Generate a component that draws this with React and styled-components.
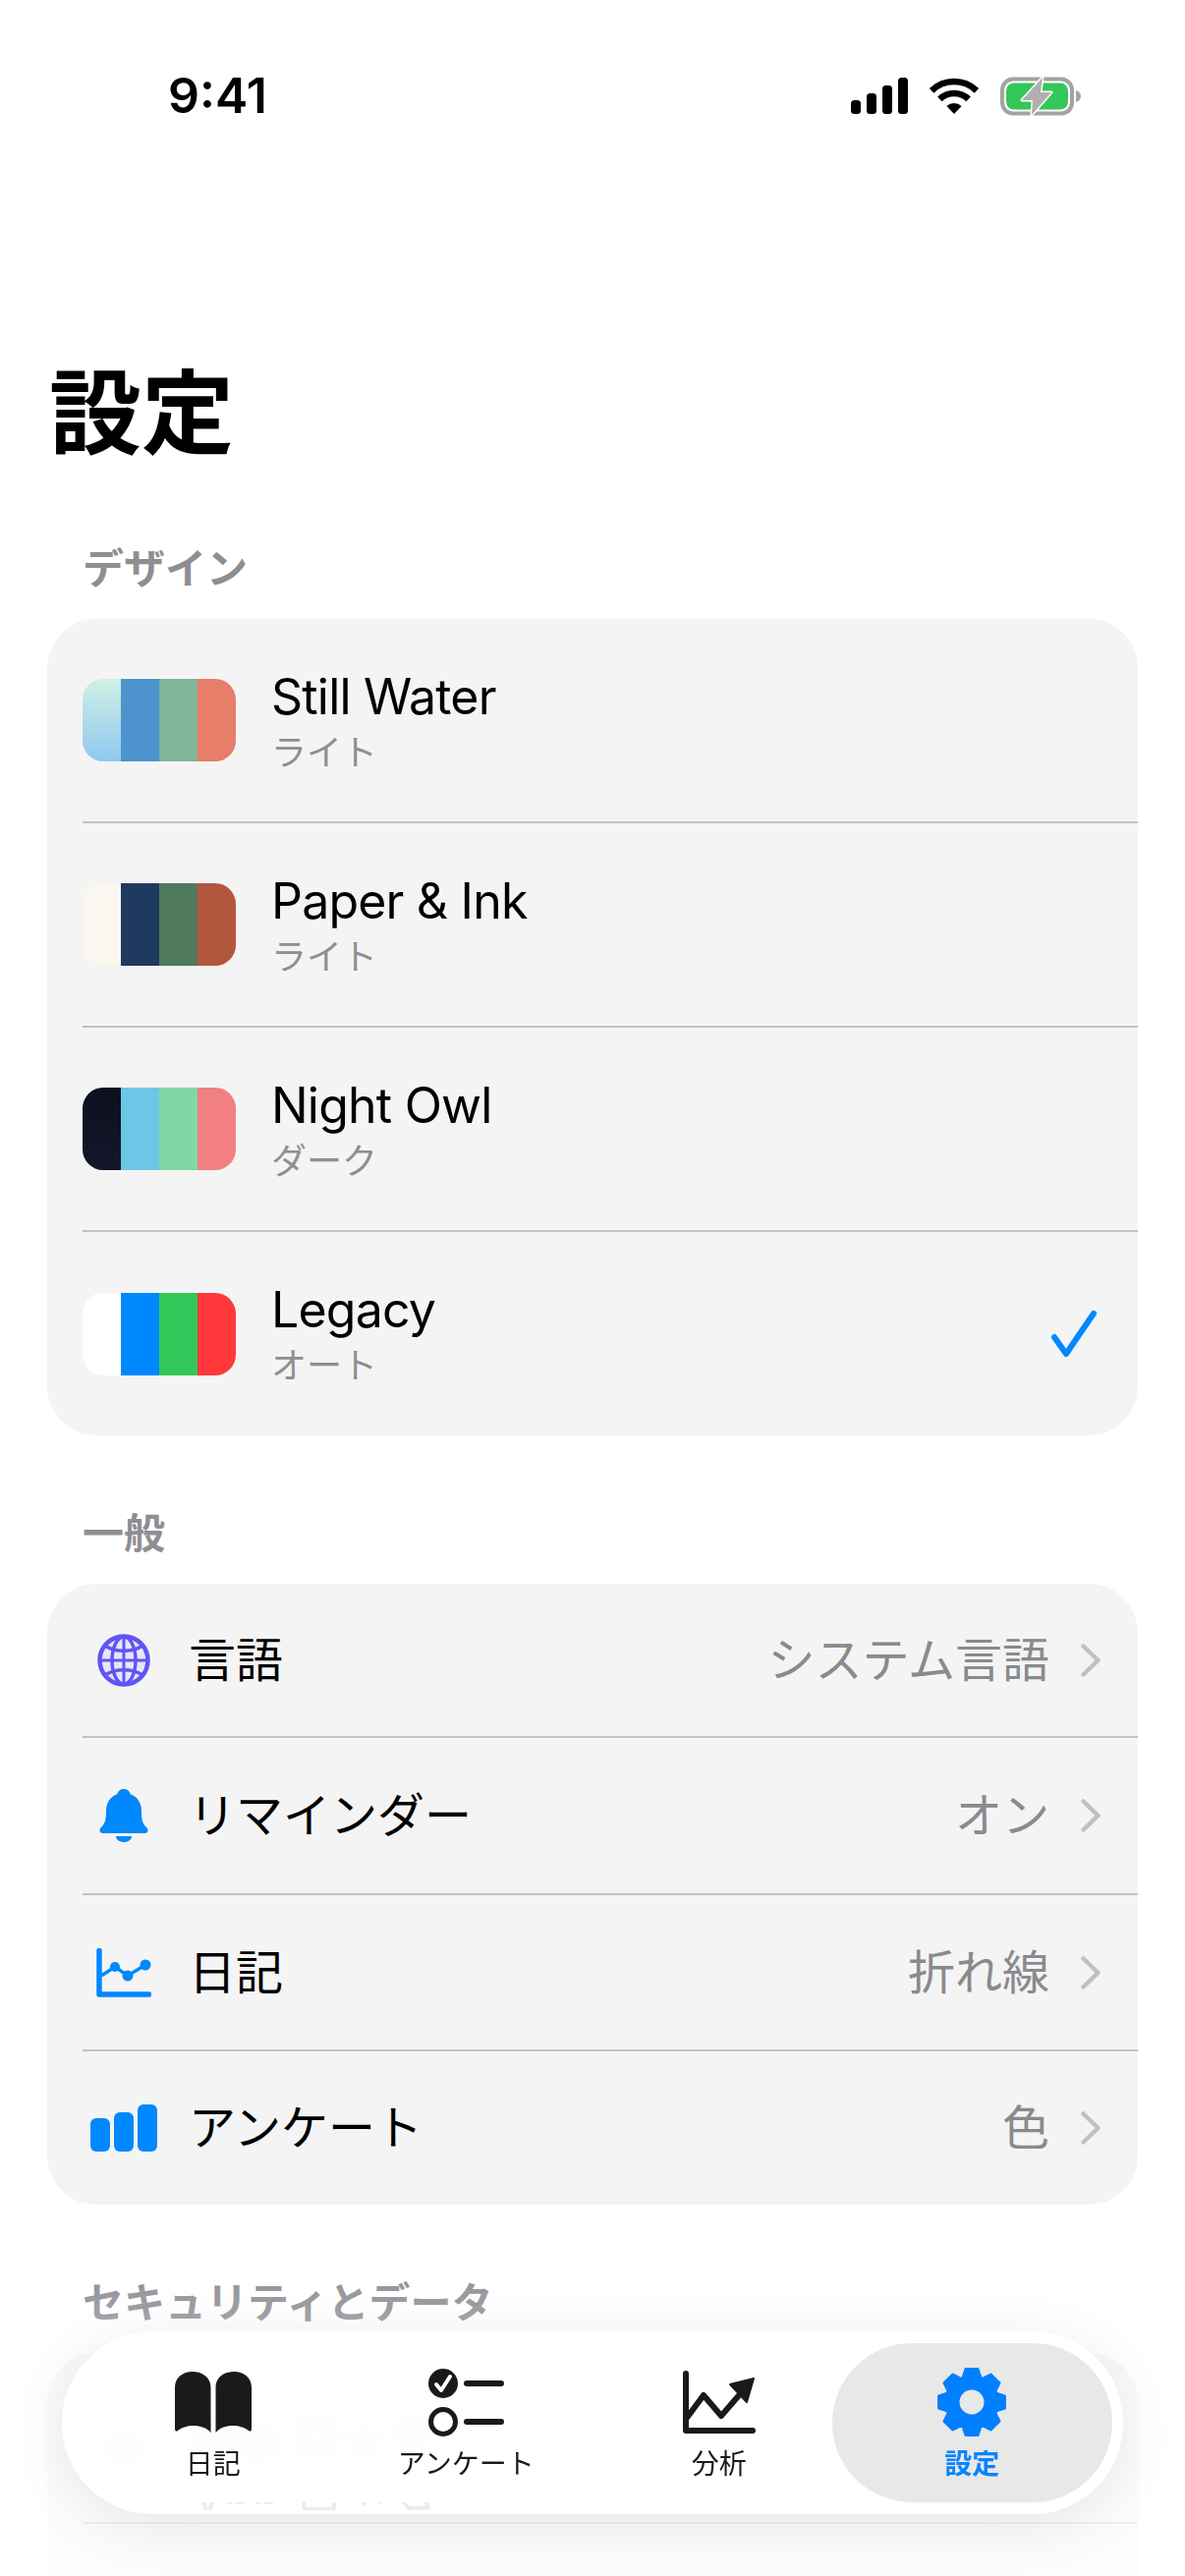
import React from 'react'
import styled, { createGlobalStyle } from 'styled-components'

const GlobalStyle = createGlobalStyle`
  html, body {
    margin: 0;
    padding: 0;
    background: #fff;
  }
  * {
    box-sizing: border-box;
  }
`

const FONT = `Inter, "Noto Sans CJK JP", sans-serif`
const BLUE = '#0088ff'

const Page = styled.div`
  position: relative;
  width: 1206px;
  height: 2622px;
  overflow: hidden;
  background: #fff;
  font-family: ${FONT};
  color: #000;
`

const StatusBar = styled.div`
  display: flex;
  justify-content: space-between;
  align-items: center;
  height: 39px;
  margin-top: 78px;
  padding: 0 106px 0 171px;
`

const Clock = styled.div`
  font-size: 50px;
  font-weight: 600;
  line-height: 41px;
`

const StatusIcons = styled.div`
  display: flex;
  align-items: center;
  gap: 22px;
`

const SignalBars = styled.div`
  display: flex;
  align-items: flex-end;
  gap: 6px;
  height: 37px;
`

const SignalBar = styled.span`
  display: block;
  width: 10px;
  height: ${p => p.$h}px;
  border-radius: 3.5px;
  background: #000;
`

const Title = styled.h1`
  margin: 256px 0 86px 50px;
  font-size: 94px;
  line-height: 96px;
  font-weight: 700;
`

const Section = styled.section`
  margin: 0 48px 76px;
`

const SectionLabel = styled.div`
  height: 48px;
  margin-bottom: 27px;
  padding-left: 36px;
  font-size: 42px;
  line-height: 48px;
  font-weight: 700;
  color: #8e8e93;
`

const Card = styled.div`
  border-radius: 50px;
  background: #f4f4f4;
  overflow: hidden;
`

const Row = styled.div`
  display: flex;
  align-items: center;
  height: ${p => p.$h}px;
  margin-left: 36px;
  padding-right: 38px;
  border-bottom: ${p => (p.$last ? 'none' : '2px solid #c2c2c4')};
`

const Swatch = styled.div`
  display: grid;
  grid-template-columns: repeat(4, 1fr);
  flex: none;
  width: 156px;
  height: 84px;
  margin-right: 36px;
  border-radius: 21px;
  overflow: hidden;
`

const Stripe = styled.span`
  display: block;
  background: ${p => p.$color};
`

const ThemeText = styled.div`
  display: flex;
  flex-direction: column;
  flex: 1;
`

const ThemeName = styled.div`
  font-size: 50px;
  line-height: 62px;
  font-weight: 400;
  letter-spacing: -0.8px;
`

const ThemeMode = styled.div`
  margin-top: 3px;
  font-size: 36px;
  line-height: 46px;
  color: #8e8e93;
`

const CheckSlot = styled.div`
  display: flex;
  margin-right: 4px;
`

const IconSlot = styled.div`
  display: flex;
  justify-content: center;
  align-items: center;
  flex: none;
  width: 84px;
  margin-right: 24px;
`

const RowLabel = styled.div`
  flex: 1;
  font-size: 48px;
  line-height: 60px;
`

const RowValue = styled.div`
  margin-right: 32px;
  font-size: 48px;
  line-height: 60px;
  color: #8a8a8e;
`

const BarsIcon = styled.div`
  display: flex;
  align-items: flex-end;
  gap: 4px;
`

const BarsIconBar = styled.span`
  display: block;
  width: 20px;
  height: ${p => p.$h}px;
  border-radius: 6px;
  background: ${BLUE};
`

const BottomFade = styled.div`
  position: absolute;
  left: 0;
  right: 0;
  bottom: 0;
  height: 320px;
  background: linear-gradient(
    rgba(255, 255, 255, 0),
    rgba(255, 255, 255, 0.15) 15%,
    rgba(255, 255, 255, 0.7) 45%,
    rgba(255, 255, 255, 0.75)
  );
  pointer-events: none;
`

const TabBar = styled.nav`
  position: absolute;
  left: 63px;
  right: 63px;
  bottom: 63px;
  height: 186px;
  display: grid;
  grid-template-columns: repeat(4, 1fr);
  padding: 12px 25px;
  border-radius: 93px;
  overflow: hidden;
  background: rgba(255, 255, 255, 0.9);
  backdrop-filter: blur(6px);
  box-shadow: 0 10px 60px rgba(0, 0, 0, 0.09), inset 0 0 0 7px rgba(255, 255, 255, 0.75);
`

const EdgeEcho = styled.div`
  position: absolute;
  left: 132px;
  bottom: 4px;
  height: 8px;
  overflow: hidden;
  font-size: 48px;
  line-height: 30px;
  color: #ececee;
  filter: blur(0.6px);
  transform: scaleY(-1);
`

const TabItem = styled.div`
  position: relative;
  z-index: 1;
  display: flex;
  flex-direction: column;
  align-items: center;
  margin: 0 -14px;
  padding-top: 24px;
  border-radius: 81px;
  background: ${p => (p.$active ? '#e8e8e8' : 'transparent')};
  color: ${p => (p.$active ? '#0a84ff' : '#1a1a1a')};
`

const TabIcon = styled.div`
  display: flex;
  justify-content: center;
  align-items: center;
  height: 72px;
  margin-bottom: 12px;
`

const TabLabel = styled.div`
  font-size: 28px;
  line-height: 30px;
  font-weight: ${p => (p.$active ? 700 : 400)};
`

const themes = [
  { name: 'Still Water', mode: 'ライト', h: 208, colors: ['linear-gradient(#cff0e6, #90c8ee)', '#4d94cf', '#81b698', '#e87d69'] },
  { name: 'Paper & Ink', mode: 'ライト', h: 208, colors: ['#faf7f0', '#1e3a5f', '#4f7a5e', '#b3563e'] },
  { name: 'Night Owl', mode: 'ダーク', h: 208, colors: ['linear-gradient(#0c0f1c, #13172b)', '#6ec6e6', '#82d8a5', '#f28080'] },
  { name: 'Legacy', mode: 'オート', h: 207, colors: ['#ffffff', BLUE, '#34c759', '#ff383c'], selected: true },
]

const WifiIcon = () => (
  <svg width="50" height="37" viewBox="0 0 50 37">
    <path d="M2.100 13.300A33 33 0 0 1 47.900 13.300" fill="none" stroke="#000" strokeWidth="6.500" />
    <path d="M10.400 21.900A21 21 0 0 1 39.600 21.900" fill="none" stroke="#000" strokeWidth="6.500" />
    <path d="M25 37L17.400 29.100A11 11 0 0 1 32.600 29.100Z" fill="#000" />
  </svg>
)

const BatteryIcon = () => (
  <svg width="82" height="40" viewBox="0 0 82 40">
    <rect x="2" y="2.500" width="71" height="35" rx="11" fill="none" stroke="#a3a3a3" strokeWidth="4" />
    <rect x="6" y="6.500" width="63" height="27" rx="8" fill="#34c759" />
    <path d="M77 14c3 1 5 3 5 6s-2 5-5 6z" fill="#a3a3a3" />
    <path
      d="M43 1L22 24H33L32 39L52 16H41Z"
      fill="#b0b0b0"
      stroke="#fff"
      strokeWidth="3"
      strokeLinejoin="round"
      paintOrder="stroke"
    />
  </svg>
)

const Check = () => (
  <svg width="46" height="47" viewBox="0 0 46 47">
    <path d="M3 27L15 44L43 3" fill="none" stroke={BLUE} strokeWidth="6" strokeLinecap="round" strokeLinejoin="round" />
  </svg>
)

const Chevron = () => (
  <svg width="20" height="34" viewBox="0 0 20 34">
    <path d="M2.500 2.500L17.500 17L2.500 31.500" fill="none" stroke="#c0c0c4" strokeWidth="4.500" strokeLinecap="round" strokeLinejoin="round" />
  </svg>
)

const GlobeIcon = () => (
  <svg width="54" height="54" viewBox="0 0 54 54" fill="none" stroke="#6155f5">
    <circle cx="27" cy="27" r="24.500" strokeWidth="4.500" fill="#e7e5fb" />
    <path d="M27 3V51M3 27H51" strokeWidth="3" />
    <ellipse cx="27" cy="27" rx="12" ry="24" strokeWidth="3.500" />
    <path d="M8 12C18 19 36 19 46 12M8 42C18 35 36 35 46 42" strokeWidth="3.500" />
  </svg>
)

const BellIcon = () => (
  <svg width="50" height="54" viewBox="0 0 50 54" fill={BLUE}>
    <path d="M25 0c-3.500 0-6 2-6.500 5C11 8 7 14 7 22c0 9-1 13-5 17c-2.500 2.500-2 6 2 6h42c4 0 4.500-3.500 2-6c-4-4-5-8-5-17c0-8-4-14-11.500-17C31 2 28.500 0 25 0z" />
    <path d="M17 48h16c0 3.500-3.500 6-8 6s-8-2.500-8-6z" />
  </svg>
)

const LineIcon = () => (
  <svg width="56" height="50" viewBox="0 0 56 50" fill="none" stroke={BLUE}>
    <path d="M3 2.500V47H53.500" strokeWidth="5.500" strokeLinecap="round" strokeLinejoin="round" />
    <path d="M5 28L19 19L32 28L50 17" strokeWidth="3.500" />
    <circle cx="19" cy="19" r="5" fill={BLUE} stroke="none" />
    <circle cx="32" cy="28" r="5.500" fill={BLUE} stroke="none" />
    <circle cx="50" cy="17" r="5.500" fill={BLUE} stroke="none" />
  </svg>
)

const LockIcon = () => (
  <svg width="44" height="56" viewBox="0 0 44 56">
    <path d="M10 24V14a12 12 0 0 1 24 0V24" fill="none" stroke="#c4c4c8" strokeWidth="5" />
    <rect x="3" y="23" width="38" height="32" rx="7" fill="#c4c4c8" />
  </svg>
)

const BookIcon = () => (
  <svg width="78" height="62" viewBox="0 0 78 62" fill="currentColor">
    <path d="M0 58Q0 62 3 60C10 54 28 52 36.500 62V16C36.500 6 28 0 18 0C8 0 0 6 0 16Z" />
    <path d="M78 58Q78 62 75 60C68 54 50 52 41.500 62V16C41.500 6 50 0 60 0C70 0 78 6 78 16Z" />
  </svg>
)

const ChecklistIcon = () => (
  <svg width="77" height="69" viewBox="0 0 77 69" fill="none" stroke="currentColor">
    <circle cx="15" cy="15" r="15" fill="currentColor" stroke="none" />
    <path d="M8 16L13 22L22 8" stroke="#fff" strokeWidth="4" strokeLinecap="round" strokeLinejoin="round" />
    <path d="M39 15H74" strokeWidth="6" strokeLinecap="round" />
    <circle cx="15" cy="54" r="12.500" strokeWidth="5" />
    <path d="M39 54H74" strokeWidth="6" strokeLinecap="round" />
  </svg>
)

const TrendIcon = () => (
  <svg width="74" height="64" viewBox="0 0 74 64" fill="none" stroke="currentColor">
    <path d="M3 3V61H71" strokeWidth="6" strokeLinecap="round" strokeLinejoin="round" />
    <path d="M4 48L21 25L39 46L58 24" strokeWidth="6" strokeLinejoin="round" />
    <path d="M72 8L48 14L65 32Z" fill="currentColor" stroke="currentColor" strokeWidth="2" strokeLinejoin="round" />
  </svg>
)

// 8 teeth, worked out once instead of typing out the points
const gearPath = () => {
  const pts = []
  for (let i = 0; i < 8; i++) {
    const a = (i * Math.PI) / 4 - Math.PI / 2
    const at = (r, d) => `${(36 + r * Math.cos(a + d)).toFixed(2)} ${(36 + r * Math.sin(a + d)).toFixed(2)}`
    pts.push(at(26.500, -0.34), at(34, -0.18), at(34, 0.18), at(26.500, 0.34))
  }
  return `M${pts.join('L')}Z`
}

const GearIcon = () => (
  <svg width="72" height="72" viewBox="0 0 72 72">
    <path d={gearPath()} fill="#007fff" stroke="#007fff" strokeWidth="3" strokeLinejoin="round" />
    <circle cx="36" cy="36" r="12.500" fill="#e8e8e8" />
  </svg>
)

const tabs = [
  { label: '日記', icon: <BookIcon /> },
  { label: 'アンケート', icon: <ChecklistIcon /> },
  { label: '分析', icon: <TrendIcon /> },
  { label: '設定', icon: <GearIcon />, active: true },
]

const general = [
  { label: '言語', value: 'システム言語', icon: <GlobeIcon />, h: 157 },
  { label: 'リマインダー', value: 'オン', icon: <BellIcon />, h: 160 },
  { label: '日記', value: '折れ線', icon: <LineIcon />, h: 159 },
  {
    label: 'アンケート',
    value: '色',
    h: 156,
    icon: (
      <BarsIcon>
        <BarsIconBar $h={34} />
        <BarsIconBar $h={40} />
        <BarsIconBar $h={48} />
      </BarsIcon>
    ),
  },
]

export default function App() {
  return (
    <Page>
      <GlobalStyle />
      <StatusBar>
        <Clock>9:41</Clock>
        <StatusIcons>
          <SignalBars>
            <SignalBar $h={14} />
            <SignalBar $h={21} />
            <SignalBar $h={29} />
            <SignalBar $h={37} />
          </SignalBars>
          <WifiIcon />
          <BatteryIcon />
        </StatusIcons>
      </StatusBar>

      <Title>設定</Title>

      <Section>
        <SectionLabel>デザイン</SectionLabel>
        <Card>
          {themes.map((t, i) => (
            <Row key={t.name} $h={t.h} $last={i === themes.length - 1}>
              <Swatch>
                {t.colors.map(c => (
                  <Stripe key={c} $color={c} />
                ))}
              </Swatch>
              <ThemeText>
                <ThemeName>{t.name}</ThemeName>
                <ThemeMode>{t.mode}</ThemeMode>
              </ThemeText>
              {t.selected && (
                <CheckSlot>
                  <Check />
                </CheckSlot>
              )}
            </Row>
          ))}
        </Card>
      </Section>

      <Section>
        <SectionLabel>一般</SectionLabel>
        <Card>
          {general.map((r, i) => (
            <Row key={r.label} $h={r.h} $last={i === general.length - 1}>
              <IconSlot>{r.icon}</IconSlot>
              <RowLabel>{r.label}</RowLabel>
              <RowValue>{r.value}</RowValue>
              <Chevron />
            </Row>
          ))}
        </Card>
      </Section>

      <Section>
        <SectionLabel>セキュリティとデータ</SectionLabel>
        <Card>
          <Row $h={174}>
            <IconSlot>
              <LockIcon />
            </IconSlot>
            <RowLabel>App ロック</RowLabel>
            <RowValue>オフ</RowValue>
            <Chevron />
          </Row>
          <Row $h={174} $last />
        </Card>
      </Section>

      <BottomFade />

      <TabBar>
        <EdgeEcho>App ロック</EdgeEcho>
        {tabs.map(t => (
          <TabItem key={t.label} $active={t.active}>
            <TabIcon>{t.icon}</TabIcon>
            <TabLabel $active={t.active}>{t.label}</TabLabel>
          </TabItem>
        ))}
      </TabBar>
    </Page>
  )
}
